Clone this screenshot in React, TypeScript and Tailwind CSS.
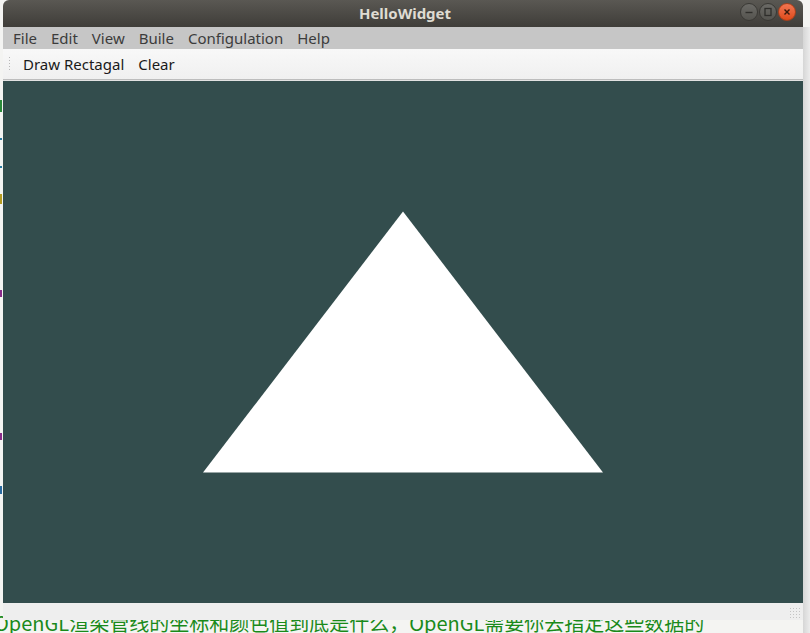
import React from 'react'

// Ubuntu-styled Qt window drawn over a light editor background
const menus = ['File', 'Edit', 'View', 'Buile', 'Configulation', 'Help']

function TitleButton({ kind }: { kind: 'min' | 'max' | 'close' }) {
  const close = kind === 'close'
  return (
    <div
      className={
        'w-[18px] h-[18px] rounded-full flex items-center justify-center border ' +
        (close
          ? 'bg-gradient-to-b from-[#f27550] to-[#df4a16] border-[#a8401c]'
          : 'bg-gradient-to-b from-[#6b6a66] to-[#55544f] border-[#3a3935]')
      }
    >
      <svg width="10" height="10" viewBox="0 0 10 10">
        {kind === 'min' && <line x1="1.5" y1="5.5" x2="8.5" y2="5.5" stroke="#2f2e2b" strokeWidth="1.4" />}
        {kind === 'max' && <rect x="2" y="1.5" width="6" height="7" fill="none" stroke="#2f2e2b" strokeWidth="1.3" />}
        {kind === 'close' && (
          <g stroke="#3b1a0c" strokeWidth="1.4">
            <line x1="2.5" y1="2.5" x2="7.5" y2="7.5" />
            <line x1="7.5" y1="2.5" x2="2.5" y2="7.5" />
          </g>
        )}
      </svg>
    </div>
  )
}

export default function App() {
  return (
    <div className="relative w-[810px] h-[633px] overflow-hidden bg-[#f4f4f2] font-['Noto_Sans','DejaVu_Sans',sans-serif]">
      {/* editor text peeking behind the window */}
      <div className="absolute left-[-6px] top-[612px] whitespace-nowrap text-[20px] leading-[22px] text-[#1a8a1a] font-['Noto_Sans_CJK_SC',sans-serif]">
        OpenGL渲染管线的坐标和颜色值到底是什么，OpenGL需要你去指定这些数据的
      </div>
      <div className="absolute left-0 top-[100px] w-[3px] h-[480px] flex flex-col gap-[26px]">
        <div className="h-[12px] border-l-2 border-[#2a8a3a]" />
        <div className="h-[2px] w-[2px] bg-[#2a7aa0]" />
        <div className="h-[2px] w-[2px] bg-[#2a7aa0]" />
        <div className="h-[10px] border-l-2 border-[#b59b20]" />
        <div className="h-[7px] border-l-2 border-[#8a2a8a] mt-[60px]" />
        <div className="h-[7px] border-l-2 border-[#8a2a8a] mt-[110px]" />
        <div className="h-[8px] border-l-2 border-[#2a6aa0] mt-[20px]" />
      </div>

      <div className="absolute left-[3px] top-0 w-[800px] h-[620px] flex flex-col">
        {/* title bar */}
        <div className="h-[27px] bg-gradient-to-b from-[#5a5853] to-[#3f3d39] rounded-t-[6px] flex items-center relative">
          <div className="flex-1 text-center text-[15px] font-bold text-[#dfdbd2] pl-[4px]">HelloWidget</div>
          <div className="absolute right-[7px] top-[3px] flex gap-[1px]">
            <TitleButton kind="min" />
            <TitleButton kind="max" />
            <TitleButton kind="close" />
          </div>
        </div>

        {/* menu bar */}
        <div className="h-[22px] bg-[#c6c6c6] flex items-center pl-[10px] gap-[14px] text-[15px] text-[#3c3c3c]">
          {menus.map((m) => (
            <span key={m}>{m}</span>
          ))}
        </div>

        {/* toolbar */}
        <div className="h-[31px] bg-gradient-to-b from-[#f8f8f8] to-[#f0f0f0] border-b border-[#bdbdbd] flex items-center text-[15px] text-[#1a1a1a]">
          <div className="ml-[5px] w-[3px] h-[16px] bg-[radial-gradient(circle,#b8b8b8_0.8px,transparent_1px)] bg-[length:3px_3px]" />
          <span className="ml-[12px]">Draw Rectagal</span>
          <span className="ml-[14px]">Clear</span>
        </div>
        <div className="h-[1px] bg-[#e2e2e2]" />

        {/* GL view */}
        <div className="h-[522px] bg-[#334d4d]">
          <svg width="800" height="522" viewBox="0 0 800 522" className="block">
            <polygon points="200,391.5 600,391.5 400,130.5" fill="#ffffff" />
          </svg>
        </div>

        {/* status bar */}
        <div className="flex-1 bg-[#eeeeee] flex justify-end items-end">
          <div className="w-[12px] h-[12px] mr-[2px] mb-[1px] bg-[radial-gradient(circle,#c4c4c4_0.8px,transparent_1px)] bg-[length:3px_3px]" />
        </div>
      </div>
      <div className="absolute left-[803px] top-[27px] w-[7px] h-[606px] bg-gradient-to-r from-[#d6d6d6] to-[#ececec]" />
    </div>
  )
}
